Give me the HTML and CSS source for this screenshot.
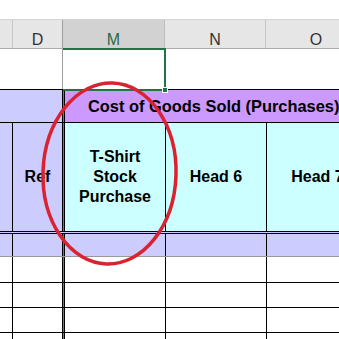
FILE: index.html
```html
<!DOCTYPE html>
<html>
<head>
<meta charset="utf-8">
<link rel="stylesheet" href="styles.css">
</head>
<body>
<div class="sheet">
  <div class="top-gap"></div>
  <div class="colhead">
    <div class="ch a"></div>
    <div class="ch d">D</div>
    <div class="ch m sel">M</div>
    <div class="ch n">N</div>
    <div class="ch o">O</div>
  </div>
  <div class="row r1">
    <div class="c a"></div>
    <div class="c d"></div>
    <div class="c m"></div>
    <div class="c n"></div>
    <div class="c o"></div>
  </div>
  <div class="row r2">
    <div class="c ad"></div>
    <div class="c title">Cost of Goods Sold (Purchases)</div>
  </div>
  <div class="row r3">
    <div class="c a"></div>
    <div class="c d">Ref</div>
    <div class="c m dbl">T-Shirt<br>Stock<br>Purchase</div>
    <div class="c n">Head 6</div>
    <div class="c o">Head 7</div>
  </div>
  <div class="row r4">
    <div class="c a"></div>
    <div class="c d"></div>
    <div class="c m dbl"></div>
    <div class="c n"></div>
    <div class="c o"></div>
  </div>
  <div class="row rw first">
    <div class="c a"></div>
    <div class="c d"></div>
    <div class="c m dbl"></div>
    <div class="c n"></div>
    <div class="c o"></div>
  </div>
  <div class="row rw">
    <div class="c a"></div>
    <div class="c d"></div>
    <div class="c m dbl"></div>
    <div class="c n"></div>
    <div class="c o"></div>
  </div>
  <div class="row rw">
    <div class="c a"></div>
    <div class="c d"></div>
    <div class="c m dbl"></div>
    <div class="c n"></div>
    <div class="c o"></div>
  </div>
  <div class="row rw">
    <div class="c a"></div>
    <div class="c d"></div>
    <div class="c m dbl"></div>
    <div class="c n"></div>
    <div class="c o"></div>
  </div>

  <div class="selection"><span class="handle"></span></div>

  <svg class="annot" width="339" height="339" viewBox="0 0 339 339">
    <ellipse cx="109.5" cy="173.5" rx="66.5" ry="90.5" fill="none" stroke="#DB2230" stroke-width="3.5" transform="rotate(2 109.5 173.5)"/>
  </svg>
</div>
</body>
</html>
```

FILE: styles.css
```css
html, body {
  margin: 0;
  padding: 0;
  background: #fff;
}

.sheet {
  position: relative;
  width: 339px;
  height: 339px;
  overflow: hidden;
  background: #fff;
  font-family: "Liberation Sans", Arial, sans-serif;
}

.top-gap {
  height: 19px;
}

/* column headers */
.colhead {
  display: grid;
  grid-template-columns: 13px 50px 102px 101px 101px;
  height: 28px;
  border-top: 1px solid #d5d5d5;
  border-bottom: 1px solid #ababab;
  background: #e6e6e6;
  width: 367px;
}

.ch {
  box-sizing: border-box;
  border-right: 1px solid #c8c8c8;
  padding-top: 12px;
  line-height: 16px;
  font-size: 16px;
  color: #333;
  text-align: center;
}

.ch.d {
  border-right-color: #9e9e9e;
}

.ch.sel {
  background: #d2d2d2;
  color: #2b6a45;
  border-right-color: #bdbdbd;
}

/* rows */
.row {
  display: grid;
  grid-template-columns: 13px 49px 104px 101px 101px;
  width: 368px;
}

.c {
  box-sizing: border-box;
  font-size: 16px;
  font-weight: bold;
  color: #000;
  text-align: center;
}

.r1 {
  height: 40px;
  grid-template-columns: 13px 50px 102px 101px 101px;
  width: 367px;
}

.r1 .d {
  border-right: 1px solid #9e9e9e;
}

.r2 {
  grid-template-columns: 62px 306px;
  border-top: 1px solid #000;
  height: 32px;
}

.r2 .ad {
  background: #ccccff;
}

.r2 .title {
  background:
    linear-gradient(to right, #000 0 1px, #777 1px 2px, #000 2px 3px, transparent 3px) no-repeat,
    #cc99ff;
  padding-left: 26px;
  font-size: 16.4px;
  line-height: 32px;
  text-align: left;
  white-space: nowrap;
}

.r3 {
  border-top: 1px solid #000;
  height: 108px;
}

.r3 .c {
  display: flex;
  align-items: center;
  justify-content: center;
  line-height: 20px;
}

.r3 .a,
.r3 .d {
  background: #ccccff;
}

.r3 .n,
.r3 .o {
  background: #ccffff;
}

.r3 .m.dbl {
  background:
    linear-gradient(to right, #000 0 1px, #777 1px 2px, #000 2px 3px, transparent 3px) no-repeat,
    #ccffff;
}

.r4 {
  border-top: 3px double #000;
  border-bottom: 1px solid #999;
  height: 22px;
  background: #ccccff;
}

.rw {
  height: 24px;
  border-bottom: 1px solid #000;
}

.rw.first {
  height: 25px;
}

.r3 .a, .r4 .a, .rw .a {
  border-right: 1px solid #000;
}

.r3 .m, .r4 .m, .rw .m {
  padding-left: 3px;
  border-right: 1px solid #000;
}

.r3 .n, .r4 .n, .rw .n {
  border-right: 1px solid #000;
}

.dbl {
  background: linear-gradient(to right, #000 0 1px, #777 1px 2px, #000 2px 3px, transparent 3px) no-repeat;
}

/* selection overlay */
.selection {
  position: absolute;
  left: 63px;
  top: 48px;
  width: 103px;
  height: 43px;
  box-sizing: border-box;
  border-top: 2px solid #217346;
  border-right: 2px solid #217346;
  border-bottom: 2px solid #217346;
}

.handle {
  position: absolute;
  right: -4px;
  bottom: -4px;
  width: 6px;
  height: 6px;
  background: #217346;
  border: 1px solid #fff;
  box-sizing: border-box;
}

.annot {
  position: absolute;
  left: 0;
  top: 0;
  pointer-events: none;
}
```
